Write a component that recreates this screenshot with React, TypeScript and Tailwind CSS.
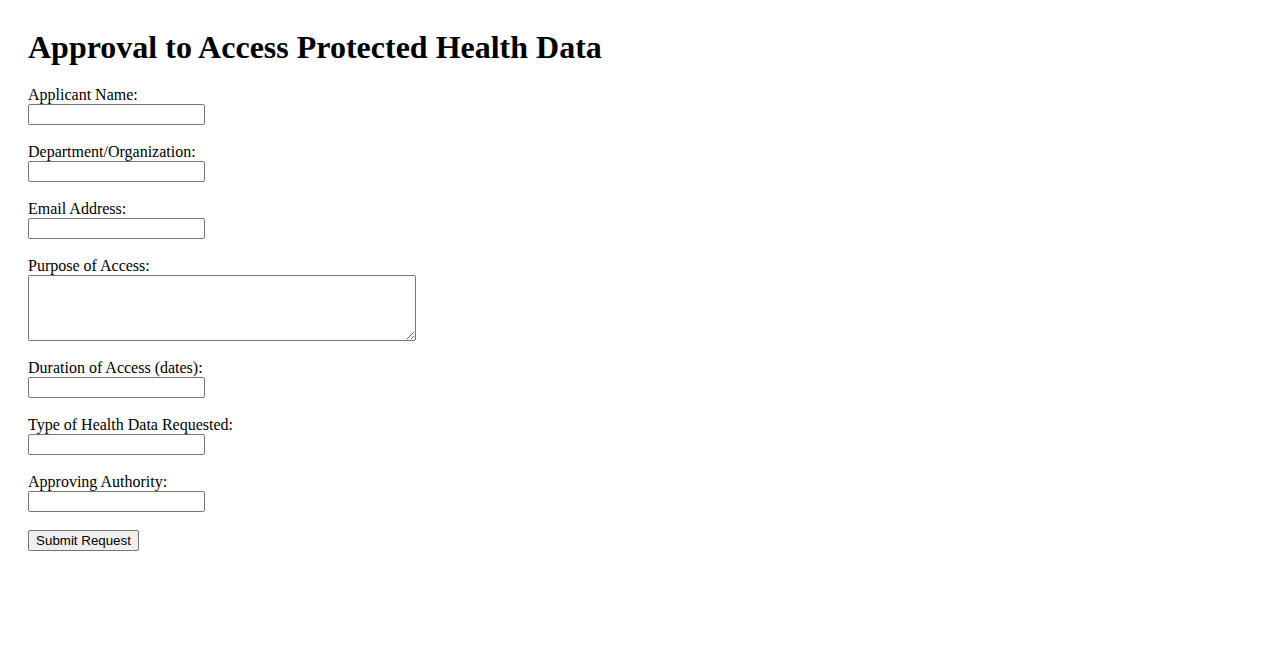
import React from "react";

const fields = [
  { id: "name", label: "Applicant Name:" },
  { id: "dept", label: "Department/Organization:" },
  { id: "email", label: "Email Address:" },
  { id: "purpose", label: "Purpose of Access:", area: true },
  { id: "duration", label: "Duration of Access (dates):" },
  { id: "type", label: "Type of Health Data Requested:" },
  { id: "authority", label: "Approving Authority:" },
];

const serif = "font-['Liberation_Serif','Times_New_Roman',serif]";

export default function App() {
  return (
    <div className={`min-h-screen bg-white text-black px-[28px] pt-[29px] ${serif}`}>
      <h1 className="text-[32px] leading-[37px] font-bold mb-[20px]">
        Approval to Access Protected Health Data
      </h1>

      <form className="flex flex-col gap-[18px]" onSubmit={e => e.preventDefault()}>
        {fields.map(f => (
          <div key={f.id} className="flex flex-col items-start">
            <label htmlFor={f.id} className="text-[16px] leading-[18px] h-[18px]">
              {f.label}
            </label>
            {f.area ? (
              <textarea
                id={f.id}
                className="w-[388px] h-[66px] border border-[#767676] rounded-[2px] bg-white"
              />
            ) : (
              <input
                id={f.id}
                type="text"
                className="w-[177px] h-[21px] border border-[#767676] rounded-[2px] bg-white"
              />
            )}
          </div>
        ))}

        <div className="flex items-start">
          <button
            type="submit"
            className="w-[111px] h-[21px] bg-[#efefef] border border-[#767676] rounded-[2px] text-[13.33px] leading-[15px] font-['Liberation_Sans',Arial,sans-serif] text-black"
          >
            Submit Request
          </button>
        </div>
      </form>
    </div>
  );
}
